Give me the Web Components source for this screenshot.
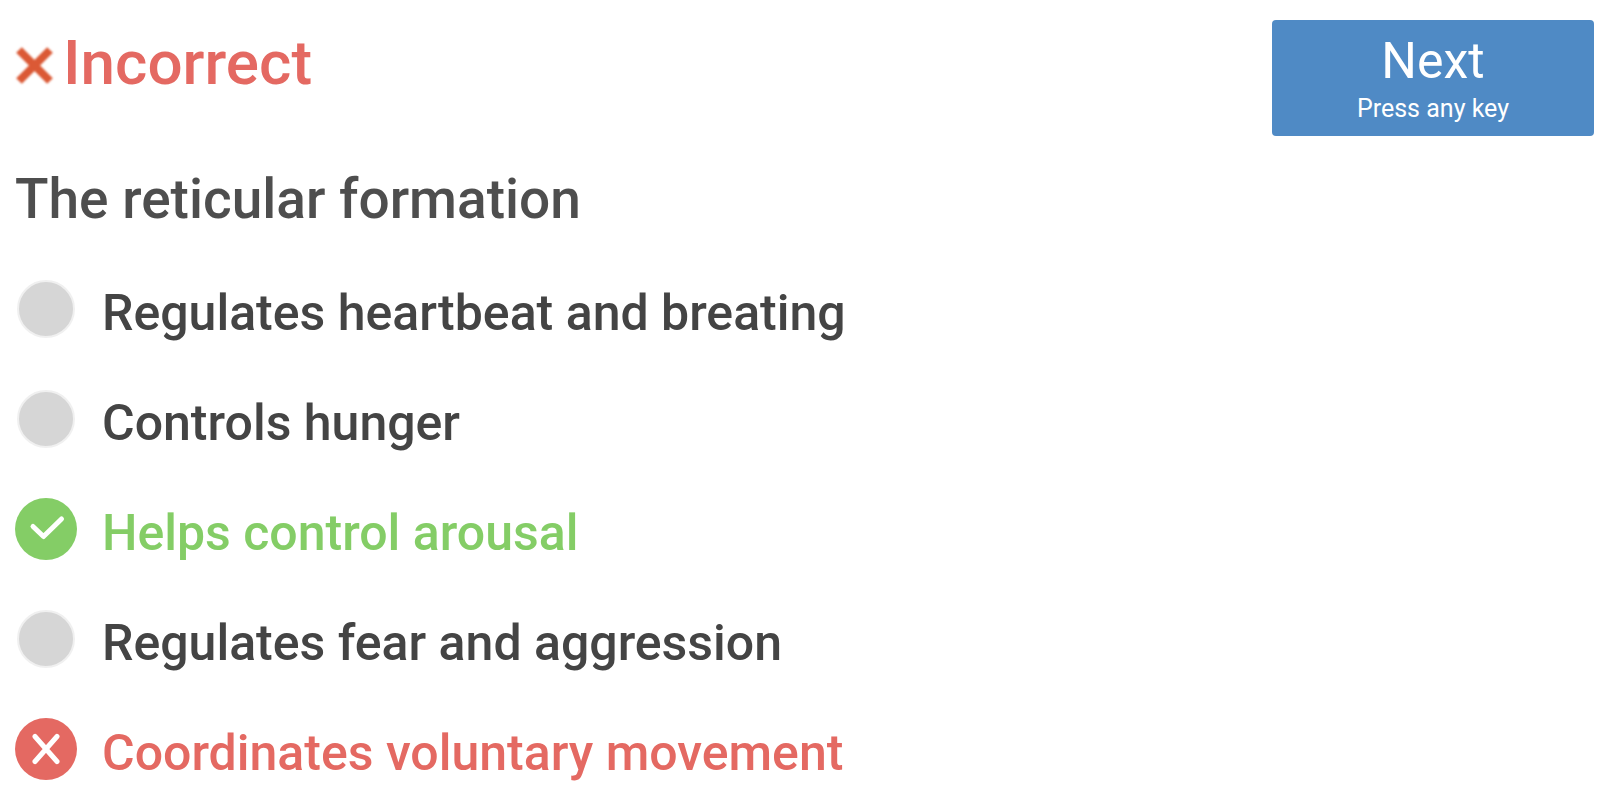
<!DOCTYPE html>
<html lang="en">
<head>
<meta charset="utf-8">
<title>Question</title>
<style>body{margin:0;background:#fff;font-family:Roboto,sans-serif;color:#444}</style>
</head>
<body>
<quiz-page>
<answer-option>Regulates heartbeat and breating</answer-option>
<answer-option>Controls hunger</answer-option>
<answer-option state="correct">Helps control arousal</answer-option>
<answer-option>Regulates fear and aggression</answer-option>
<answer-option state="wrong">Coordinates voluntary movement</answer-option>
</quiz-page>
<script>
class QuizHeader extends HTMLElement {
  constructor() {
    super();
    this.attachShadow({mode: 'open'}).innerHTML = `<style>
:host{display:flex;justify-content:space-between;align-items:flex-start}
h1{margin:0;padding-top:7px;display:flex;align-items:center;gap:8px;font-size:62px;line-height:72px;font-weight:500;color:#e46962}
svg{width:40px;height:40px;padding-top:6px;filter:blur(1px)}
button{font:inherit;border:0;border-radius:4px;background:#4f8ac5;color:#fff;min-width:322px;padding:12px 24px 8px;display:flex;flex-direction:column;align-items:center;cursor:pointer}
.title{font-size:50px;line-height:58px}
.hint{font-size:25px;line-height:38px}
</style>
<h1><svg viewBox="0 0 40 40" aria-hidden="true"><path d="M4 4L35 35M35 4L4 35" stroke="#db5935" stroke-width="8"/></svg>Incorrect</h1>
<button type="button"><span class="title">Next</span><span class="hint">Press any key</span></button>`;
  }
}

const MARKS = {
  correct: '<circle cx="31" cy="31" r="31" fill="#84cd66"/><path d="M18 28.5L28.5 38.5L46.5 21"/>',
  wrong: '<circle cx="31" cy="31" r="31" fill="#e46962"/><path d="M20 18.5L42 43.5M42 18.5L20 43.5"/>',
  none: '<circle cx="31" cy="31" r="28" fill="#d6d6d6" stroke="#f0f0f0" stroke-width="2"/>'
};

class AnswerOption extends HTMLElement {
  constructor() { super(); this.attachShadow({mode: 'open'}); }
  connectedCallback() {
    const state = this.getAttribute('state') || 'none';
    this.shadowRoot.innerHTML = `<style>
:host{display:block;font-size:50px;line-height:72px;font-weight:500}
:host([state=correct]){color:#84cd66}
:host([state=wrong]){color:#e46962}
label{display:flex;align-items:flex-start;gap:25px}
.mark{display:grid;flex:none;padding-top:1px}
input,svg{grid-area:1/1;width:62px;height:62px;margin:0}
input{appearance:none}
path{fill:none;stroke:#fff;stroke-width:5;stroke-linecap:round;stroke-linejoin:round}
</style>
<label><span class="mark"><input type="radio" name="answer" disabled${state === 'wrong' ? ' checked' : ''}><svg viewBox="0 0 62 62" aria-hidden="true">${MARKS[state]}</svg></span><span><slot></slot></span></label>`;
  }
}

class QuizPage extends HTMLElement {
  constructor() {
    super();
    this.attachShadow({mode: 'open'}).innerHTML = `<style>
:host{display:block;padding:20px 6px 0 15px}
h2{margin:27px 0 42px;font-size:55px;line-height:72px;font-weight:500;color:#4e4e4e}
main{display:grid;gap:38px}
</style>
<quiz-header></quiz-header><h2>The reticular formation</h2><main><slot></slot></main>`;
  }
}
customElements.define('quiz-header', QuizHeader);
customElements.define('answer-option', AnswerOption);
customElements.define('quiz-page', QuizPage);
</script>
</body>
</html>
